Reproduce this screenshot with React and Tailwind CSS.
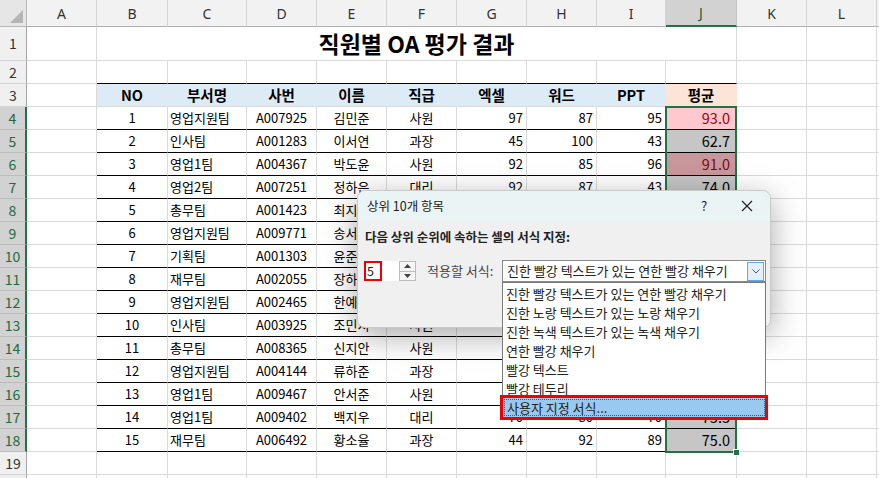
import React from 'react';

const COLS = [
  { k: 'A', w: 'w-[70px]' },
  { k: 'B', w: 'w-[71px]' },
  { k: 'C', w: 'w-[79px]' },
  { k: 'D', w: 'w-[70px]' },
  { k: 'E', w: 'w-[70px]' },
  { k: 'F', w: 'w-[70px]' },
  { k: 'G', w: 'w-[70px]' },
  { k: 'H', w: 'w-[70px]' },
  { k: 'I', w: 'w-[69px]' },
  { k: 'J', w: 'w-[71px]' },
  { k: 'K', w: 'w-[70px]' },
  { k: 'L', w: 'w-[70px]' },
  { k: 'M', w: 'w-[60px]' },
];

const DATA = [
  [1, '영업지원팀', 'A007925', '김민준', '사원', 97, 87, 95, '93.0'],
  [2, '인사팀', 'A001283', '이서연', '과장', 45, 100, 43, '62.7'],
  [3, '영업1팀', 'A004367', '박도윤', '사원', 92, 85, 96, '91.0'],
  [4, '영업2팀', 'A007251', '정하은', '대리', 92, 87, 43, '74.0'],
  [5, '총무팀', 'A001423', '최지우', '사원', 78, 66, 80, '74.7'],
  [6, '영업지원팀', 'A009771', '송서윤', '사원', 88, 90, 92, '90.0'],
  [7, '기획팀', 'A001303', '윤준호', '과장', 65, 72, 70, '69.0'],
  [8, '재무팀', 'A002055', '장하린', '사원', 81, 77, 69, '75.7'],
  [9, '영업지원팀', 'A002465', '한예준', '대리', 90, 94, 85, '89.7'],
  [10, '인사팀', 'A003925', '조민서', '사원', 55, 61, 58, '58.0'],
  [11, '총무팀', 'A008365', '신지안', '사원', 72, 68, 75, '71.7'],
  [12, '영업지원팀', 'A004144', '류하준', '과장', 60, 74, 66, '66.7'],
  [13, '영업1팀', 'A009467', '안서준', '사원', 83, 70, 79, '77.3'],
  [14, '영업1팀', 'A009402', '백지우', '대리', 70, 80, 70, '73.3'],
  [15, '재무팀', 'A006492', '황소율', '과장', 44, 92, 89, '75.0'],
];

const GRID_R = 'border-r-[#dadada]';
const GRID_B = 'border-b-[#dadada]';
const BLACK_B = 'border-b-black';

function Cell({ w, r = GRID_R, b = GRID_B, className = '', children }) {
  return (
    <div className={`${w} shrink-0 h-full border-r border-b ${r} ${b} flex items-center overflow-hidden whitespace-nowrap ${className}`}>
      {children}
    </div>
  );
}

function RowHead({ n, sel }) {
  return (
    <div
      className={
        sel
          ? 'w-[27px] shrink-0 h-full flex items-center justify-center text-[14px] bg-[#d2d2d2] text-[#1e6b41] border-b border-b-[#bcbcbc] border-r-2 border-r-[#217346]'
          : 'w-[27px] shrink-0 h-full flex items-center justify-center text-[14px] bg-[#f0f0f0] text-[#333] border-b border-b-[#d4d4d4] border-r border-r-[#a6a6a6]'
      }
    >
      {n}
    </div>
  );
}

function ColHeader() {
  return (
    <div className="flex h-[27px]">
      <div className="w-[27px] shrink-0 h-full bg-[#e6e6e6] border-r border-b border-[#b8b8b8] flex items-end justify-end p-[3px]">
        <svg width="13" height="13" viewBox="0 0 13 13">
          <polygon points="13,0 13,13 0,13" fill="#b5b5b5" />
        </svg>
      </div>
      {COLS.map((c) =>
        c.k === 'J' ? (
          <div key={c.k} className={`${c.w} shrink-0 h-full bg-[#d2d2d2] text-[#1d5e3a] border-r border-r-[#c4c4c4] border-b-2 border-b-[#217346] flex items-center justify-center text-[14px] font-['Noto_Sans',sans-serif]`}>
            {c.k}
          </div>
        ) : (
          <div key={c.k} className={`${c.w} shrink-0 h-full bg-[#f2f2f2] text-[#333] border-r border-r-[#d4d4d4] border-b border-b-[#b0b0b0] flex items-center justify-center text-[14px] font-['Noto_Sans',sans-serif]`}>
            {c.k}
          </div>
        )
      )}
    </div>
  );
}

function EmptyRow({ n, h = 'h-[23px]', blackB = false }) {
  return (
    <div className={`flex ${h}`}>
      <RowHead n={n} />
      {COLS.map((c, i) => (
        <Cell key={c.k} w={c.w} b={blackB && i >= 1 && i <= 9 ? BLACK_B : GRID_B} />
      ))}
    </div>
  );
}

function TitleRow() {
  return (
    <div className="flex h-[34px]">
      <RowHead n={1} />
      <Cell w="w-[70px]" />
      <Cell w="w-[640px]" className="justify-center text-[23px] font-bold text-black">
        직원별 OA 평가 결과
      </Cell>
      <Cell w="w-[70px]" />
      <Cell w="w-[70px]" />
      <Cell w="w-[60px]" />
    </div>
  );
}

function HeadRow() {
  const labels = ['NO', '부서명', '사번', '이름', '직급', '엑셀', '워드', 'PPT', '평균'];
  return (
    <div className="flex h-[23px]">
      <RowHead n={3} />
      <Cell w="w-[70px]" />
      {labels.map((t, i) => (
        <Cell
          key={t}
          w={COLS[i + 1].w}
          r={i >= 7 ? 'border-r-[#fce4d6]' : 'border-r-[#ddebf7]'}
          className={`justify-center text-[14.5px] font-bold text-black ${i === 8 ? 'bg-[#fce4d6]' : 'bg-[#ddebf7]'}`}
        >
          {t}
        </Cell>
      ))}
      <Cell w="w-[70px]" />
      <Cell w="w-[70px]" />
      <Cell w="w-[60px]" />
    </div>
  );
}

function DataRow({ row, idx }) {
  const [no, dept, id, name, rank, x, w, p, avg] = row;
  let jCls = 'bg-[#c6c6c6] text-black';
  if (idx === 0) jCls = 'bg-[#ffc7ce] text-[#9c0006]';
  if (idx === 2) jCls = 'bg-[#c8979c] text-[#7c0a12]';
  return (
    <div className="flex h-[23px] text-[13px] text-black">
      <RowHead n={idx + 4} sel />
      <Cell w="w-[70px]" />
      <Cell w="w-[71px]" b={BLACK_B} className="justify-center">{no}</Cell>
      <Cell w="w-[79px]" b={BLACK_B} className="pl-[2px]">{dept}</Cell>
      <Cell w="w-[70px]" b={BLACK_B} className="justify-center">{id}</Cell>
      <Cell w="w-[70px]" b={BLACK_B} className="justify-center">{name}</Cell>
      <Cell w="w-[70px]" b={BLACK_B} className="justify-center">{rank}</Cell>
      <Cell w="w-[70px]" b={BLACK_B} className="justify-end pr-[3px]">{x}</Cell>
      <Cell w="w-[70px]" b={BLACK_B} className="justify-end pr-[3px]">{w}</Cell>
      <Cell w="w-[69px]" b={BLACK_B} className="justify-end pr-[3px]">{p}</Cell>
      <Cell w="w-[71px]" b={BLACK_B} className={`justify-end pr-[6px] text-[14.5px] ${jCls}`}>{avg}</Cell>
      <Cell w="w-[70px]" />
      <Cell w="w-[70px]" />
      <Cell w="w-[60px]" />
    </div>
  );
}

const OPTIONS = [
  '진한 빨강 텍스트가 있는 연한 빨강 채우기',
  '진한 노랑 텍스트가 있는 노랑 채우기',
  '진한 녹색 텍스트가 있는 녹색 채우기',
  '연한 빨강 채우기',
  '빨강 텍스트',
  '빨강 테두리',
];

function Dialog() {
  return (
    <div className="absolute left-[357px] top-[190px] w-[414px] h-[138px] rounded-[8px] border border-[#c9c9c9] bg-[#f0f0f0] shadow-[0_8px_32px_rgba(0,0,0,0.34)] text-[#1a1a1a]">
      <div className="h-[30px] rounded-t-[8px] bg-[#ebf4f4] flex items-center pl-[9px] pr-[17px] text-[12.5px]">
        <span className="flex-1">상위 10개 항목</span>
        <span className="w-[14px] text-center text-[13px] mr-[30px]">?</span>
        <svg width="12" height="12" viewBox="0 0 12 12">
          <path d="M1 1 L11 11 M11 1 L1 11" stroke="#222" strokeWidth="1.2" />
        </svg>
      </div>
      <div className="pl-[6px] pr-[4px] pt-[8px]">
        <div className="text-[12.5px] font-bold text-[#222] leading-[16px] pl-px">다음 상위 순위에 속하는 셀의 서식 지정:</div>
        <div className="flex items-center mt-[15px] h-[22px]">
          <div className="flex items-center h-[20px]">
            <div className="w-[18px] h-[20px] border-2 border-[#ee0000] bg-white flex items-center text-[12.5px] pl-px">5</div>
            <div className="w-[17px] h-[20px] bg-white" />
            <div className="w-[17px] h-[20px] border border-[#bdbdbd] bg-[#f5f5f5] flex flex-col">
              <div className="flex-1 flex items-center justify-center border-b border-[#bdbdbd]">
                <svg width="7" height="4" viewBox="0 0 7 4"><polygon points="0,4 7,4 3.5,0" fill="#444" /></svg>
              </div>
              <div className="flex-1 flex items-center justify-center">
                <svg width="7" height="4" viewBox="0 0 7 4"><polygon points="0,0 7,0 3.5,4" fill="#444" /></svg>
              </div>
            </div>
          </div>
          <span className="ml-[11px] w-[75px] text-[13px] text-[#444] whitespace-nowrap">적용할 서식:</span>
          <div className="relative w-[264px] h-[22px] bg-white border border-[#8a8a8a] flex items-center pl-[4px] text-[13px] text-[#222]">
            <span className="flex-1 whitespace-nowrap">진한 빨강 텍스트가 있는 연한 빨강 채우기</span>
            <div className="w-[17px] h-[19px] mr-px border border-[#62a8e5] bg-[#e3eff9] flex items-center justify-center">
              <svg width="8" height="5" viewBox="0 0 8 5">
                <path d="M0.5 0.5 L4 4 L7.5 0.5" stroke="#555" strokeWidth="1" fill="none" />
              </svg>
            </div>
            <div className="absolute left-[-1px] top-[21px] w-[264px] bg-white border border-[#7a7a7a] text-[13px] text-[#222] pt-px">
              {OPTIONS.map((o) => (
                <div key={o} className="h-[19px] flex items-center pl-[3px] whitespace-nowrap">{o}</div>
              ))}
              <div className="h-[19px] bg-[#99c9ef] outline-[3px] outline-solid outline-[#ee0000] flex items-center pl-[1px]">
                <div className="flex-1 h-[17px] border border-dotted border-[#555] flex items-center pl-[2px]">사용자 지정 서식...</div>
              </div>
            </div>
          </div>
        </div>
      </div>
    </div>
  );
}

export default function App() {
  return (
    <div className="relative w-[879px] h-[478px] overflow-hidden bg-white font-['Noto_Sans_CJK_KR','Noto_Sans',sans-serif]">
      <ColHeader />
      <TitleRow />
      <EmptyRow n={2} blackB />
      <HeadRow />
      {DATA.map((r, i) => (
        <DataRow key={r[0]} row={r} idx={i} />
      ))}
      <EmptyRow n={19} />
      <EmptyRow n={20} />

      {/* selection J4:J18 */}
      <div className="absolute left-[665px] top-[106px] w-[72px] h-[347px] border-2 border-[#217346] pointer-events-none" />
      <div className="absolute left-[733px] top-[449px] w-[7px] h-[7px] bg-[#217346] border border-white" />

      <Dialog />
    </div>
  );
}
